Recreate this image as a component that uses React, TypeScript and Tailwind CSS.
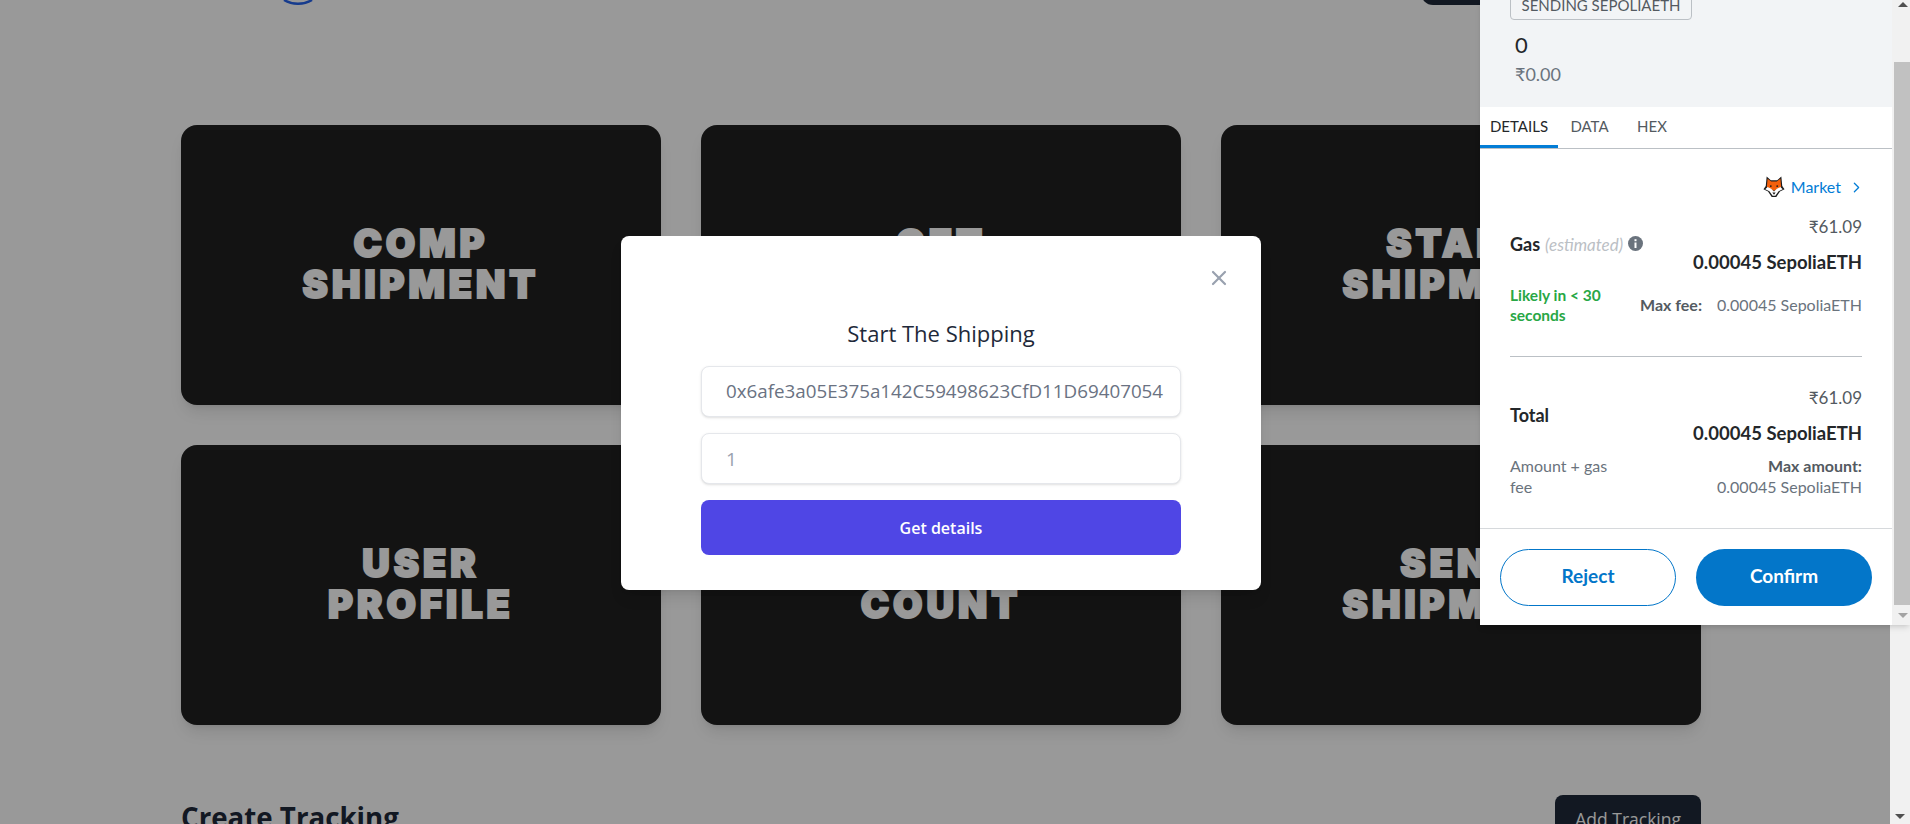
import { ChevronRight, X } from 'lucide-react'

const pageFont = "font-['Open_Sans',sans-serif]"
const walletFont = "font-['Lato',sans-serif]"

const cards = [
  ['COMP', 'SHIPMENT'],
  ['GET', 'SHIPMENT'],
  ['START', 'SHIPMENT'],
  ['USER', 'PROFILE'],
  ['SHIPMENT', 'COUNT'],
  ['SEND', 'SHIPMENT'],
]

function FoxIcon() {
  return (
    <svg width="22" height="24" viewBox="0 0 24 24" className="shrink-0">
      <path d="M4 0.500l4.500 4h7L20 0.500l1 10.500 2.500 3.500-5 2.500-4 6h-5l-4-6-5-2.500L3 11z" fill="#1c1c1c" />
      <path d="M5 3l4 3h6l4-3 .8 9-7.800 4-7.800-4z" fill="#f4600c" />
      <path d="M2.500 14.500l2.500-2.500 4 2 3 3 3-3 4-2 2.500 2.500-4.500 2-3.500 5h-3L7 16.500z" fill="#fff" />
      <path d="M10.200 18h3.600L12 20.500z" fill="#1c1c1c" />
      <circle cx="8.500" cy="11" r="1" fill="#1c1c1c" />
      <circle cx="15.500" cy="11" r="1" fill="#1c1c1c" />
    </svg>
  )
}

function AmountLines({ top }: { top: string }) {
  return (
    <div className="flex flex-col items-end">
      <span className="h-[35px] text-[17px] leading-[22px] text-[#535a61]">{top}</span>
      <span className="text-[18.500px] leading-[22px] font-bold text-[#24272a]">0.00045 SepoliaETH</span>
    </div>
  )
}

function WalletPopup() {
  return (
    <div className={`absolute top-0 left-[1480px] z-20 flex h-[625px] w-[430px] overflow-hidden bg-white shadow-md ${walletFont}`}>
      <div className="flex w-[412px] flex-col">
        <div className="h-[107px] bg-[#f2f4f6] pl-[30px]">
          <div className="-mt-[8px] flex h-[28px] w-[182px] items-center justify-center rounded-[4px] border border-[#bbc0c5] pb-[2px] text-[15px] text-[#535a61]">
            SENDING SEPOLIAETH
          </div>
          <div className="mt-[12px] pl-[5px] text-[22px] leading-[26px] text-[#24272a]">0</div>
          <div className="mt-[4px] pl-[5px] text-[18px] leading-[24px] text-[#6a737d]">₹0.00</div>
        </div>

        <div className="flex h-[42px] border-b border-[#bbc0c5] text-[15px] text-[#535a61]">
          <div className="flex h-[41px] w-[78px] items-center justify-center border-b-[3px] border-[#037dd6] text-[#24272a]">DETAILS</div>
          <div className="flex w-[63px] items-center justify-center pb-[3px]">DATA</div>
          <div className="flex w-[62px] items-center justify-center pb-[3px]">HEX</div>
        </div>

        <div className="flex h-[379px] flex-col px-[30px]">
          <div className="mt-[26px] -mr-[3px] flex items-center justify-end gap-[6px] text-[16px] text-[#037dd6]">
            <FoxIcon />
            <span>Market</span>
            <ChevronRight size={17} strokeWidth={1.8} className="ml-[1px]" />
          </div>

          <div className="mt-[17px] flex items-center justify-between">
            <div className="flex items-center">
              <span className="text-[18px] font-bold text-[#24272a]">Gas</span>
              <span className="ml-[5px] text-[17px] text-[#bbc0c5] italic">(estimated)</span>
              <svg width="15" height="15" viewBox="0 0 15 15" className="mb-[2px] ml-[5px]">
                <circle cx="7.500" cy="7.500" r="7.500" fill="#6a737d" />
                <rect x="6.500" y="6.500" width="2" height="5.500" fill="#fff" />
                <rect x="6.500" y="3.200" width="2" height="2" fill="#fff" />
              </svg>
            </div>
            <AmountLines top="₹61.09" />
          </div>

          <div className="mt-[12px] flex items-start justify-between">
            <div className="w-[110px] text-[15.500px] leading-[20px] font-bold text-[#28a745]">Likely in &lt; 30 seconds</div>
            <div className="mt-[10px] flex gap-[15px] text-[16px] leading-[20px] text-[#6a737d]">
              <span className="font-bold text-[#535a61]">Max fee:</span>
              <span>0.00045 SepoliaETH</span>
            </div>
          </div>

          <div className="mt-[31px] border-t border-[#bbc0c5]" />

          <div className="mt-[30px] flex items-center justify-between">
            <span className="text-[18px] font-bold text-[#24272a]">Total</span>
            <AmountLines top="₹61.09" />
          </div>

          <div className="mt-[11px] flex justify-between text-[16px] leading-[21px] text-[#6a737d]">
            <div className="w-[110px]">Amount + gas fee</div>
            <div className="text-right">
              <div className="font-bold text-[#535a61]">Max amount:</div>
              <div>0.00045 SepoliaETH</div>
            </div>
          </div>
        </div>

        <div className="flex flex-1 justify-center gap-[20px] border-t border-[#d6d9dc] pt-[20px]">
          <button type="button" className="h-[57px] w-[176px] rounded-full border border-[#0376c9] pb-[3px] text-[19px] font-bold text-[#0376c9]">Reject</button>
          <button type="button" className="h-[57px] w-[176px] rounded-full bg-[#0376c9] pb-[3px] text-[19px] font-bold text-white">Confirm</button>
        </div>
      </div>

      <div className="flex flex-1 flex-col bg-[#f1f1f1]">
        <div className="flex h-[62px] justify-center pt-[2px]">
          <div className="ml-[3px] h-0 w-0 border-x-[5px] border-b-[5px] border-x-transparent border-b-[#505050]" />
        </div>
        <div className="ml-[2px] h-[543px] bg-[#c1c1c1]" />
        <div className="flex flex-1 items-center justify-center">
          <div className="ml-[3px] h-0 w-0 border-x-[5px] border-t-[5px] border-x-transparent border-t-[#a3a3a3]" />
        </div>
      </div>
    </div>
  )
}

function ModalCard() {
  return (
    <div className="relative z-10 h-[354px] w-[640px] rounded-lg bg-white px-[80px] pt-[83px] shadow-lg">
      <button type="button" className="absolute top-[30px] right-[30px] text-gray-400">
        <X size={24} strokeWidth={2.200} />
      </button>
      <h3 className="text-center text-[22px] leading-[28px] font-medium text-gray-800">Start The Shipping</h3>
      <div className="mt-[19px] flex h-[51px] items-center overflow-hidden rounded-lg border border-gray-200 bg-white pl-6 text-[18.800px] whitespace-nowrap text-gray-500 shadow-sm">
        0x6afe3a05E375a142C59498623CfD11D69407054
      </div>
      <div className="mt-4 flex h-[51px] items-center rounded-lg border border-gray-200 bg-white pt-[2px] pl-6 text-[19px] text-gray-400 shadow-sm">
        1
      </div>
      <button type="button" className="mt-4 h-[55px] w-full rounded-lg bg-[#4f46e5] text-[16px] font-semibold text-white">
        Get details
      </button>
    </div>
  )
}

export default function App() {
  return (
    <div className={`flex h-[824px] w-full overflow-hidden bg-white ${pageFont}`}>
      <main className="relative flex-1">
        <header className="relative flex h-[5px] overflow-hidden">
          <svg width="32" height="32" viewBox="0 0 32 32" className="absolute bottom-0 left-[282px]">
            <path d="M2 27A28 28 0 0 0 30 27" fill="none" stroke="#2563eb" strokeWidth="2.500" />
          </svg>
          <div className="absolute right-[410px] bottom-0 h-[40px] w-[59px] rounded-l-xl bg-gray-800" />
        </header>

        <div className="pt-[120px] pl-[181px]">
          <div className="grid w-[1520px] grid-cols-3 gap-10">
            {cards.map(([first, second]) => (
              <div key={first + second} className="flex h-[280px] flex-col items-center justify-center rounded-2xl bg-[#212121] pb-[3px] text-center font-['Inter',sans-serif] text-[38px] leading-[41px] font-black tracking-[4px] text-white shadow-lg [-webkit-text-stroke:2px_white]">
                <span>{first}</span>
                <span>{second}</span>
              </div>
            ))}
          </div>

          <div className="mt-[70px] flex w-[1520px] items-start justify-between">
            <h2 className="mt-[4px] text-[27.700px] leading-[36px] font-bold text-gray-800">Create Tracking</h2>
            <button type="button" className="rounded-lg bg-gray-800 px-5 py-[11px] text-[17.500px] font-medium text-white">Add Tracking</button>
          </div>
        </div>

        <div className="absolute inset-0 flex items-center justify-center bg-black/40 pt-[2px] pr-[8px]">
          <ModalCard />
        </div>
      </main>

      <aside className="flex w-[20px] flex-col justify-end bg-[#f1f1f1] pb-[5px]">
        <div className="ml-[5px] h-0 w-0 border-x-[5px] border-t-[5px] border-x-transparent border-t-[#505050]" />
      </aside>

      <WalletPopup />
    </div>
  )
}
